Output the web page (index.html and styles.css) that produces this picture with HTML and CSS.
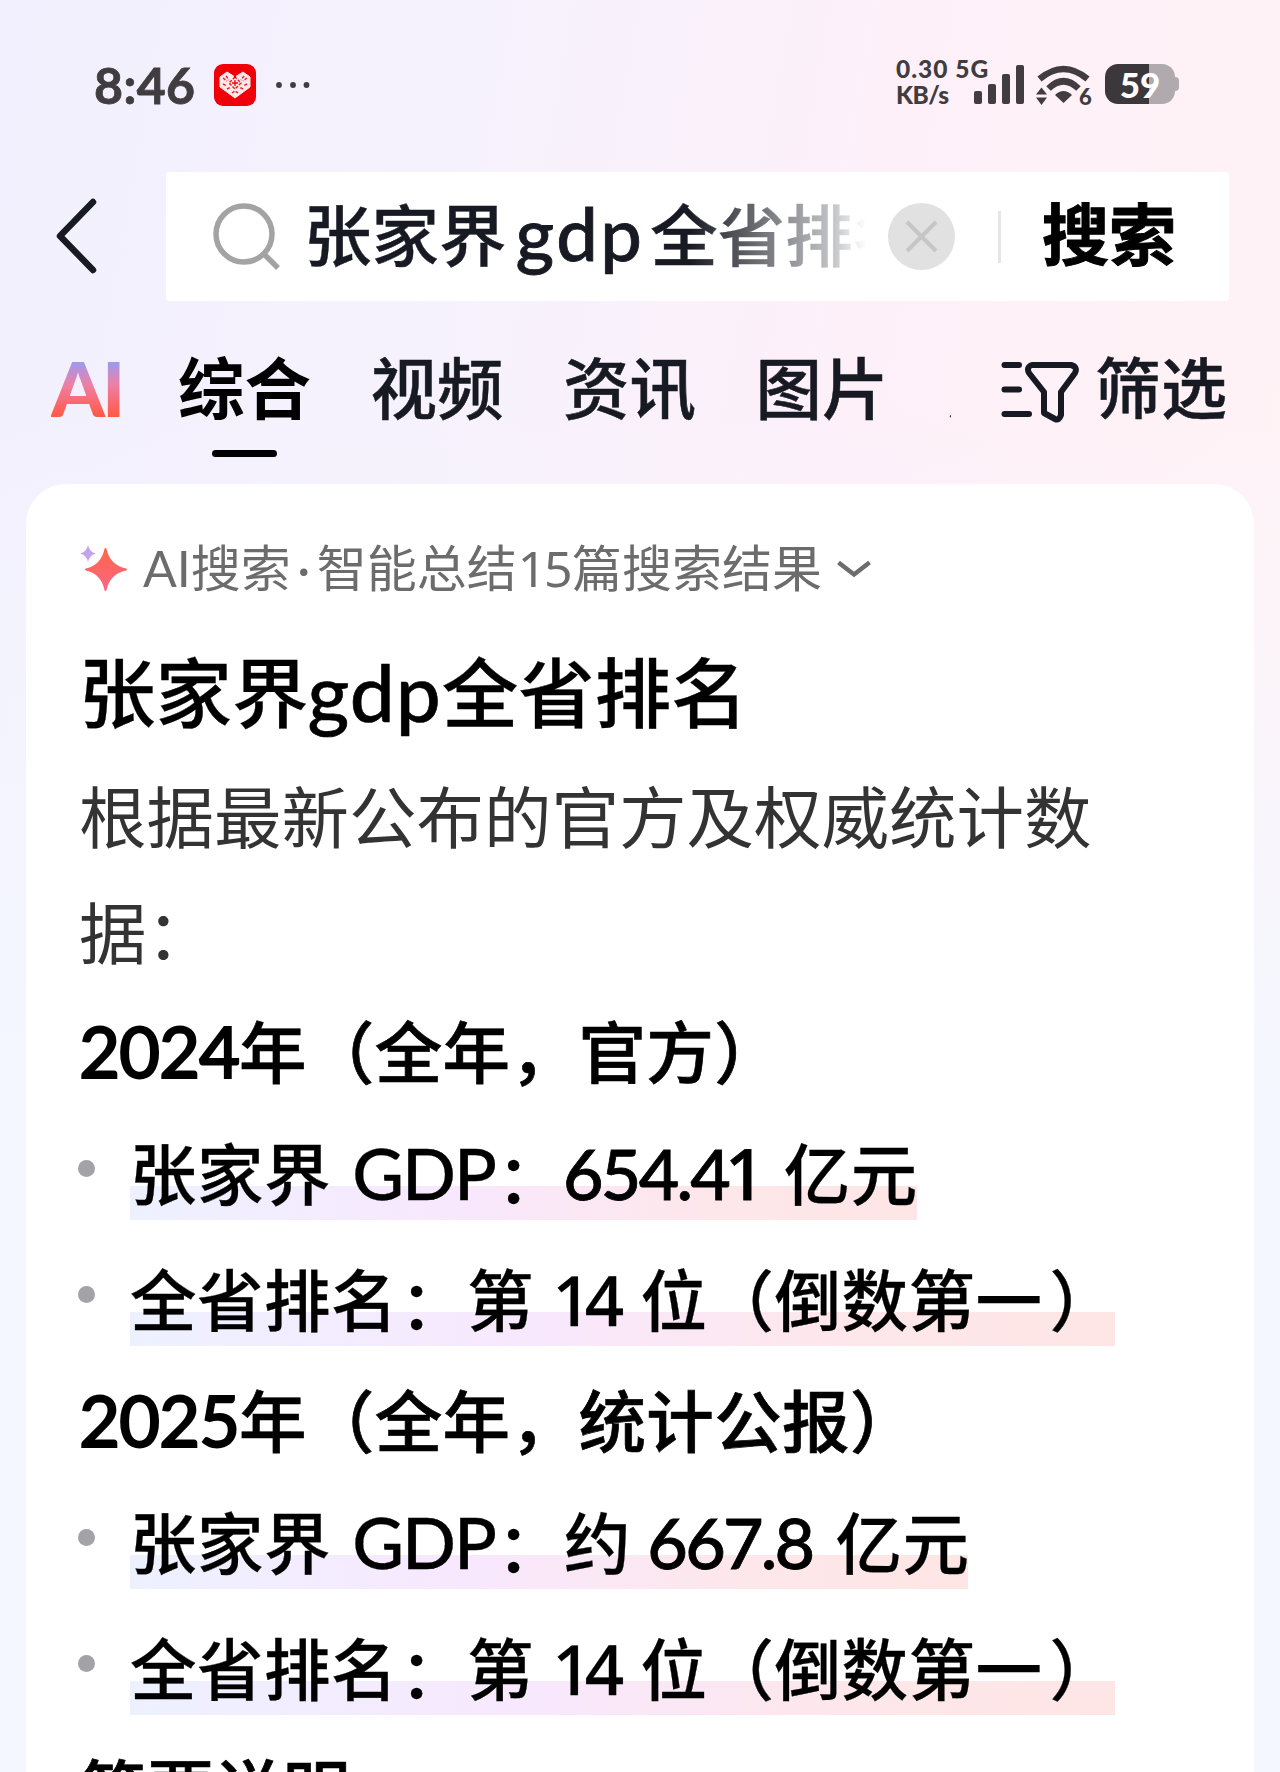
FILE: index.html
```html
<!DOCTYPE html>
<html lang="zh-CN">
<head>
  <meta charset="UTF-8" />
  <meta name="viewport" content="width=device-width, initial-scale=1.0" />
  <title>张家界gdp全省排名</title>
  <link rel="stylesheet" href="styles.css">
</head>
<body>
  <!-- status bar -->
  <div class="status">
    <div class="time">8:46</div>
    <svg class="app-icon" width="42" height="42" viewBox="0 0 42 42">
      <rect width="42" height="42" rx="9" fill="#f00008" />
      <path d="M13 8 L21 13 L29 8 L36 13 V23 L21 34 L6 23 V13 Z" fill="#fde9e9" stroke="#fde9e9" stroke-linejoin="round" />
      <path d="M21 13 L15 19 L21 25 L27 19 Z M9 14 l4 3 M12 12 l3 4 M33 14 l-4 3 M30 12 l-3 4 M9 20 l4 2 M33 20 l-4 2 M13 25 l4 -2 M29 25 l-4 -2 M18 29 l3 -2 l3 2" fill="none" stroke="#e8202a" stroke-width="1.5" stroke-dasharray="3 1.5" />
      <path d="M21 9 V14" stroke="#f00008" stroke-width="2" />
      <path d="M18 19h6M21 16v6" stroke="#f00008" stroke-width="1.3" />
    </svg>
    <svg class="dots" width="34" height="6" viewBox="0 0 34 6">
      <circle cx="3" cy="3" r="2.9" /><circle cx="17" cy="3" r="2.9" /><circle cx="30.5" cy="3" r="2.9" />
    </svg>
    <div class="net"><span>0.30 5G</span><span>KB/s</span></div>
    <svg class="signal" width="50" height="40" viewBox="0 0 50 40">
      <rect x="0" y="26" width="8" height="13" rx="2" />
      <rect x="14" y="19" width="8" height="20" rx="2" />
      <rect x="28" y="9" width="8" height="30" rx="2" />
      <rect x="42" y="0" width="8" height="39" rx="2" />
    </svg>
    <svg class="wifi" width="58" height="46" viewBox="0 0 58 46">
      <path d="M3.5 14 Q27.5 -6 51.5 14" fill="none" stroke="#403c40" stroke-width="6.5" />
      <path d="M12.5 23.5 Q27.5 9 42.5 23.5" fill="none" stroke="#403c40" stroke-width="6.5" />
      <path d="M19 30 Q27.5 22 36 30 L27.5 38 Z" />
      <path d="M5.5 22.5 L11 29.5 H0 Z M0 32.5 H11 L5.5 40 Z" />
      <text x="43" y="39.5">6</text>
    </svg>
    <div class="battery"><span>59</span></div>
  </div>

  <!-- search bar -->
  <div class="search-row">
    <svg class="back" width="44" height="80" viewBox="0 0 44 80">
      <path d="M39 6 L6 40 L39 74" fill="none" stroke="#171a22" stroke-width="6.5" stroke-linecap="round" stroke-linejoin="round" />
    </svg>
    <div class="search-box">
      <svg class="glass" width="68" height="68" viewBox="0 0 68 68" fill="none" stroke="#a3a3a3" stroke-width="5.5">
        <circle cx="31" cy="31" r="28" />
        <path d="M51 51 L65 65" />
      </svg>
      <div class="query">张家界<span>gdp</span>全省排名</div>
      <svg class="clear" width="67" height="67" viewBox="0 0 67 67">
        <circle cx="33.5" cy="33.5" r="33.5" fill="#e1e1e1" />
        <path d="M19 19 L48 48 M48 19 L19 48" stroke="#c6c6c6" stroke-width="4" />
      </svg>
      <div class="divider"></div>
      <div class="go">搜索</div>
    </div>
  </div>

  <!-- tabs -->
  <div class="tabs">
    <div class="ai">AI</div>
    <div class="tab-list">
      <div class="tab active">综合</div>
      <div class="tab">视频</div>
      <div class="tab">资讯</div>
      <div class="tab">图片</div>
      <div class="tab">用户</div>
    </div>
    <svg class="filter-icon" width="78" height="64" viewBox="0 0 78 64" fill="none" stroke="#171a22" stroke-width="6" stroke-linecap="round" stroke-linejoin="round">
      <path d="M3.5 5 H18 M3.5 29.5 H18 M3.5 54 H28" />
      <path d="M31 5 H70 Q77 7 74 13 L60 32 V55 Q58 61 54 59 L43 53 V32 L28 13 Q25 7 31 5 Z" />
    </svg>
    <div class="filter">筛选</div>
  </div>

  <!-- answer card -->
  <div class="card">
    <div class="summary">
      <svg width="48" height="48" viewBox="0 0 48 48">
        <defs>
          <linearGradient id="spark" x1="0" y1="0" x2="0" y2="1">
            <stop offset="0" stop-color="#ff6547" />
            <stop offset="1" stop-color="#fb6684" />
          </linearGradient>
        </defs>
        <path d="M25.5 4 Q29 21 46 24.5 Q29 28 25.5 45 Q22 28 6 24.5 Q22 21 25.5 4 Z" fill="url(#spark)" stroke="url(#spark)" stroke-width="2" stroke-linejoin="round" />
        <path d="M8 0 Q9.5 7 16 8.5 Q9.5 10 8 17 Q6.5 10 0 8.5 Q6.5 7 8 0 Z" fill="#c3a3ec" />
      </svg>
      <div class="summary-text">AI搜索<i>·</i>智能总结<span class="num">15</span>篇搜索结果</div>
      <svg class="arrow" width="36" height="18" viewBox="0 0 36 18">
        <path d="M2.5 2.5 L18 14.5 L33.5 2.5" fill="none" stroke="#6c6c6c" stroke-width="4.5" />
      </svg>
    </div>
    <h1>张家界<span>gdp</span>全省排名</h1>
    <p>根据最新公布的官方及权威统计数据：</p>
    <h2><span class="year">2024</span>年（全年，官方）</h2>
    <ul>
      <li><span class="mark w1">张家界 <span class="latin">GDP</span><span class="colon">：</span><span class="value">654.4<span class="num">1</span></span> 亿元</span></li>
      <li><span class="mark w2">全省排名<span class="colon">：</span>第 <span class="num">14</span> 位（倒数第一<span class="close">）</span></span></li>
    </ul>
    <h2><span class="year">2025</span>年（全年，统计公报）</h2>
    <ul>
      <li><span class="mark w3">张家界 <span class="latin">GDP</span><span class="colon">：</span>约 <span class="value">667.8</span> 亿元</span></li>
      <li><span class="mark w2">全省排名<span class="colon">：</span>第 <span class="num">14</span> 位（倒数第一<span class="close">）</span></span></li>
    </ul>
    <h2>简要说明</h2>
  </div>
</body>
</html>
```
FILE: styles.css
```css
* {
  box-sizing: border-box;
}

body {
  margin: 0;
  height: 1772px;
  overflow: hidden;
  font-family: Lato, "Noto Sans CJK SC", sans-serif;
  color: #000;
  background:
    linear-gradient(to bottom, rgba(244, 247, 255, 0) 400px, #f4f7ff 1100px),
    linear-gradient(100deg, #f2f0fe 0%, #f6f2fd 30%, #fdf0f9 58%, #fff2f6 80%, #fff4f6 100%);
}

svg {
  display: block;
  flex: none;
}

/* status bar */
.status {
  display: flex;
  align-items: flex-start;
  height: 172px;
  padding: 64px 0 0 94px;
  color: #403c40;
  fill: #403c40;
}

.time {
  width: 120px;
  font-size: 50px;
  font-weight: 700;
  line-height: 43px;
  letter-spacing: 0.4px;
  -webkit-text-stroke: 0.8px #403c40;
}

.dots {
  margin: 18px 0 0 20px;
}

.net {
  display: flex;
  flex-direction: column;
  width: 78px;
  margin: -8px 0 0 586px;
  font-size: 24.5px;
  font-weight: 900;
  line-height: 26px;
  letter-spacing: 1px;
  white-space: nowrap;
}

.net span + span {
  letter-spacing: -0.5px;
}

.signal {
  margin-top: 1px;
}

.wifi {
  margin: 1px 0 0 12px;
}

.wifi text {
  font-size: 22px;
  font-weight: 900;
}

.battery {
  position: relative;
  width: 70px;
  height: 40px;
  margin-left: 11px;
  border-radius: 13px;
  background: linear-gradient(to right, #3b373a 44px, #b0a9ad 44px);
  color: #fff;
  font-size: 35px;
  font-weight: 900;
  line-height: 40px;
  text-align: center;
}

.battery::after {
  content: "";
  position: absolute;
  left: 70px;
  top: 13px;
  width: 4px;
  height: 14px;
  border-radius: 0 4px 4px 0;
  background: #b0a9ad;
}

/* search bar */
.search-row {
  display: flex;
  align-items: center;
  height: 129px;
  padding-left: 54px;
}

.back {
  margin-bottom: 2px;
}

.search-box {
  display: flex;
  align-items: center;
  width: 1063px;
  height: 129px;
  margin-left: 68px;
  padding-left: 47px;
  border-radius: 3px;
  background: #fff;
}

.query {
  width: 566px;
  margin: 0 0 4px 23px;
  overflow: hidden;
  white-space: nowrap;
  font-size: 67.5px;
  font-weight: 500;
  line-height: 100px;
  color: #171a22;
  -webkit-text-stroke: 0.4px #171a22;
  -webkit-mask-image: linear-gradient(to right, #000 385px, rgba(0, 0, 0, 0.55) 470px, rgba(0, 0, 0, 0.25) 530px, transparent 562px);
  mask-image: linear-gradient(to right, #000 385px, rgba(0, 0, 0, 0.55) 470px, rgba(0, 0, 0, 0.25) 530px, transparent 562px);
}

.query span {
  margin: 0 6px 0 9px;
  font-size: 74px;
  line-height: 0;
  letter-spacing: 2.5px;
  -webkit-text-stroke: 0.8px #171a22;
}

.clear {
  margin-left: 18px;
}

.divider {
  width: 3px;
  height: 52px;
  margin-left: 43px;
  background: #e6e6e6;
}

.go {
  margin: 0 0 5px 41px;
  font-size: 67px;
  font-weight: 700;
  line-height: 100px;
  -webkit-text-stroke: 1px #000;
}

/* tabs */
.tabs {
  display: flex;
  height: 183px;
  padding-left: 51px;
  font-size: 66px;
  font-weight: 500;
  line-height: 100px;
  color: #171a22;
  -webkit-text-stroke: 0.5px;
}

.ai {
  width: 127px;
  margin-top: 36px;
  font-size: 77px;
  font-weight: 900;
  letter-spacing: -3px;
  background: linear-gradient(to bottom, #9a9bf5 24px, #ee7fa4 48px, #ff5a4a 78px);
  -webkit-background-clip: text;
  background-clip: text;
  color: transparent;
  -webkit-text-stroke: 0;
}

.tab-list {
  display: flex;
  gap: 59.5px;
  width: 773px;
  height: 160px;
  padding-top: 37px;
  overflow: hidden;
}

.tab {
  position: relative;
  flex: none;
  font-size: 66.5px;
}

.active {
  color: #000;
  font-weight: 700;
  -webkit-text-stroke: 0;
}

.active::after {
  content: "";
  position: absolute;
  left: 34px;
  top: 112px;
  width: 65px;
  height: 7px;
  border-radius: 4px;
  background: #000;
}

.filter-icon {
  margin: 59px 0 0 50px;
}

.filter {
  margin: 37px 0 0 16px;
}

/* answer card */
.card {
  width: 1228px;
  height: 1288px;
  overflow: hidden;
  margin-left: 26px;
  padding: 58px 52px 0 53px;
  border-radius: 40px 40px 0 0;
  background: #fff;
}

.summary {
  display: flex;
  align-items: center;
  height: 54px;
  padding-left: 1px;
  color: #6c6c6c;
}

.summary-text {
  margin: -2px 0 0 15px;
  font-size: 50px;
  line-height: 54px;
  white-space: nowrap;
}

.summary-text i {
  display: inline-block;
  width: 26px;
  font-style: normal;
  text-align: center;
}

.summary-text .num {
  margin: 0 2px 0 1px;
}

.arrow {
  margin-left: 14px;
}

h1,
h2,
p,
ul {
  margin: 0;
  padding: 0;
}

h1 {
  height: 163px;
  padding-top: 43px;
  font-size: 76.5px;
  font-weight: 500;
  line-height: 107px;
  white-space: nowrap;
  -webkit-text-stroke: 0.3px #000;
}

h1 span {
  margin-left: -1px;
  font-size: 80px;
  line-height: 0;
  letter-spacing: 1px;
  -webkit-text-stroke: 0.6px #000;
}

p {
  width: 1030px;
  height: 232px;
  font-size: 67.5px;
  line-height: 116px;
  color: #333;
}

h2 {
  height: 120px;
  font-size: 67.5px;
  font-weight: 500;
  line-height: 122px;
  letter-spacing: 0.4px;
  white-space: nowrap;
  -webkit-text-stroke: 0.7px #000;
}

ul + h2 {
  height: 117px;
  line-height: 115px;
}

.year {
  font-size: 71px;
  line-height: 0;
  letter-spacing: -1.2px;
  -webkit-text-stroke: 1.8px #000;
}

ul {
  list-style: none;
}

li {
  display: flex;
  align-items: center;
  height: 126px;
  padding-top: 1px;
  font-size: 66.5px;
  font-weight: 500;
  line-height: 89px;
  letter-spacing: 0.5px;
  white-space: nowrap;
  -webkit-text-stroke: 0.3px #000;
}

li::before {
  content: "";
  flex: none;
  width: 17px;
  height: 17px;
  margin: -12px 35px 0 -1px;
  border-radius: 50%;
  background: #a2a2a8;
}

.mark {
  height: 90px;
  background: linear-gradient(to right, #edf1ff, #f8e8fe 40%, #fee7ea 75%, #fee6e6) 0 100% / 100% 34px no-repeat;
}

.w1 {
  width: 787px;
}

.w2 {
  width: 985px;
}

.w3 {
  width: 838px;
}

.latin {
  margin-left: 4px;
  font-size: 71px;
  line-height: 0;
  letter-spacing: -2px;
}

.value {
  margin: 0 6px 0 -1px;
  font-size: 70px;
  line-height: 0;
  letter-spacing: -2.8px;
  -webkit-text-stroke: 0.8px #000;
}

/* plain "1" without a foot */
.num {
  font-family: "Noto Sans", sans-serif;
  line-height: 0;
  letter-spacing: -2.5px;
}

.value .num {
  margin: 0 -2px 0 -3px;
}

.mark > .num {
  margin: 0 6px 0 1px;
  font-size: 69px;
  letter-spacing: -7px;
}

.colon {
  position: relative;
  top: 3px;
  left: 2px;
  margin-right: 2px;
}

.close {
  margin-left: 7px;
}
```
